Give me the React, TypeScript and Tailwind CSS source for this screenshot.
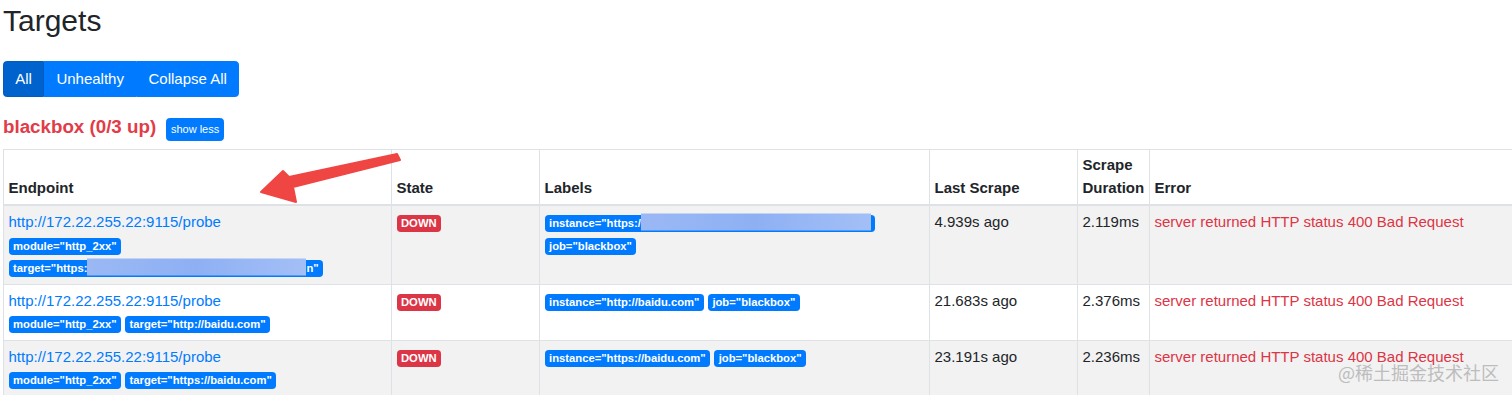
import React from "react";

const FONT = { fontFamily: '"Liberation Sans", Arial, sans-serif' };

type Row = {
  endpoint: string;
  endpointLabels: React.ReactNode[];
  labels: React.ReactNode[];
  lastScrape: string;
  duration: string;
  error: string;
  striped: boolean;
};

function Badge({ children, red }: { children: React.ReactNode; red?: boolean }) {
  return (
    <span
      className={
        red
          ? "mr-[4px] inline-block whitespace-nowrap rounded-[3.75px] bg-[#dc3545] px-[4.5px] py-[2.8px] align-baseline text-[11.25px] font-bold leading-none text-white"
          : "mr-[4px] inline-block whitespace-nowrap rounded-[3.75px] bg-[#007bff] px-[4.5px] py-[2.8px] align-baseline text-[11.25px] font-bold leading-none text-white"
      }
    >
      {children}
    </span>
  );
}

// badge with a blurred (redacted) part in the middle
function BlurBadge({ head, tail, blur }: { head: string; tail: string; blur: number }) {
  return (
    <span className="mr-[4px] inline-flex items-center whitespace-nowrap rounded-[3.75px] bg-[#007bff] px-[4.5px] py-[2.8px] align-baseline text-[11.25px] font-bold leading-none text-white">
      <span>{head}</span>
      <span
        className="-my-[2.8px] h-[17px] -translate-y-[1.5px] bg-gradient-to-r from-[#9ab8f4] via-[#8eb0f3] to-[#a3bff6]"
        style={{ width: blur }}
      />
      <span>{tail}</span>
    </span>
  );
}

const rows: Row[] = [
  {
    endpoint: "http://172.22.255.22:9115/probe",
    endpointLabels: [
      <Badge key="m">module="http_2xx"</Badge>,
      <BlurBadge key="t" head={'target="https:'} tail={'n"'} blur={219} />,
    ],
    labels: [
      <BlurBadge key="i" head={'instance="https:/'} tail="" blur={230} />,
      <Badge key="j">job="blackbox"</Badge>,
    ],
    lastScrape: "4.939s ago",
    duration: "2.119ms",
    error: "server returned HTTP status 400 Bad Request",
    striped: true,
  },
  {
    endpoint: "http://172.22.255.22:9115/probe",
    endpointLabels: [
      <Badge key="m">module="http_2xx"</Badge>,
      <Badge key="t">target="http://baidu.com"</Badge>,
    ],
    labels: [
      <Badge key="i">instance="http://baidu.com"</Badge>,
      <Badge key="j">job="blackbox"</Badge>,
    ],
    lastScrape: "21.683s ago",
    duration: "2.376ms",
    error: "server returned HTTP status 400 Bad Request",
    striped: false,
  },
  {
    endpoint: "http://172.22.255.22:9115/probe",
    endpointLabels: [
      <Badge key="m">module="http_2xx"</Badge>,
      <Badge key="t">target="https://baidu.com"</Badge>,
    ],
    labels: [
      <Badge key="i">instance="https://baidu.com"</Badge>,
      <Badge key="j">job="blackbox"</Badge>,
    ],
    lastScrape: "23.191s ago",
    duration: "2.236ms",
    error: "server returned HTTP status 400 Bad Request",
    striped: true,
  },
];

const th = "border border-b-2 border-[#dee2e6] px-[4.5px] pt-[4.5px] pb-[5px] text-left align-bottom font-bold";
const td = "border border-[#dee2e6] px-[4.5px] py-[5px] align-top";

export default function App() {
  return (
    <div className="relative h-[395px] w-[1512px] overflow-hidden bg-white pl-[3px] text-[#212529]" style={FONT}>
      <h2 className="mt-[3px] h-[36px] text-[30px] font-normal leading-[36px]">Targets</h2>

      <div className="mt-[22px] inline-flex text-[15px] leading-[22.5px] text-white">
        <button className="rounded-l-[3.75px] border border-[#005cbf] bg-[#0062cc] px-[11.25px] py-[5.6px]">All</button>
        <button className="border border-[#007bff] bg-[#007bff] px-[11.25px] py-[5.6px]">Unhealthy</button>
        <button className="rounded-r-[3.75px] border border-[#007bff] bg-[#007bff] px-[11.25px] py-[5.6px]">Collapse All</button>
      </div>

      <div className="mt-[19.5px] flex items-start">
        <span className="text-[18.75px] font-bold leading-[22.5px] text-[#e23c48]">blackbox (0/3 up)</span>
        <button className="ml-[10px] mt-[1.5px] rounded-[3.5px] border border-[#007bff] bg-[#007bff] px-[3.75px] py-[2.5px] text-[11px] leading-[16.5px] text-white">
          show less
        </button>
      </div>

      <table className="mt-[7.5px] w-[1530px] table-fixed border-collapse text-[15px] leading-[22.5px]">
        <colgroup>
          <col className="w-[388px]" />
          <col className="w-[148px]" />
          <col className="w-[390px]" />
          <col className="w-[148px]" />
          <col className="w-[72px]" />
          <col />
        </colgroup>
        <thead>
          <tr>
            <th className={th}>Endpoint</th>
            <th className={th}>State</th>
            <th className={th}>Labels</th>
            <th className={th}>Last Scrape</th>
            <th className={th}>Scrape Duration</th>
            <th className={th}>Error</th>
          </tr>
        </thead>
        <tbody>
          {rows.map((r, i) => (
            <tr key={i} className={r.striped ? "bg-[#f2f2f2]" : "bg-white"}>
              <td className={td}>
                <a className="text-[#007bff]">{r.endpoint}</a>
                <div>{r.endpointLabels}</div>
              </td>
              <td className={td}>
                <Badge red>DOWN</Badge>
              </td>
              <td className={td}>{r.labels}</td>
              <td className={td}>{r.lastScrape}</td>
              <td className={td}>{r.duration}</td>
              <td className={td}>
                <span className="text-[#dc3545]">{r.error}</span>
              </td>
            </tr>
          ))}
        </tbody>
      </table>

      {/* annotation arrow */}
      <svg className="pointer-events-none absolute left-0 top-0" width="1512" height="395" viewBox="0 0 1512 395">
        <polygon
          points="397,154 400,160 293,187 296,202 261,192 283,171 289,177"
          fill="#ef4643"
          stroke="#ef4643"
          strokeWidth="2"
          strokeLinejoin="round"
        />
      </svg>

      {/* watermark */}
      <div
        className="pointer-events-none absolute left-[1338px] top-[360px] whitespace-nowrap text-[18px] leading-[24px] text-[#bdbdbd]"
        style={{ fontFamily: '"Noto Sans CJK SC", "Liberation Sans", sans-serif' }}
      >
        @稀土掘金技术社区
      </div>
    </div>
  );
}
